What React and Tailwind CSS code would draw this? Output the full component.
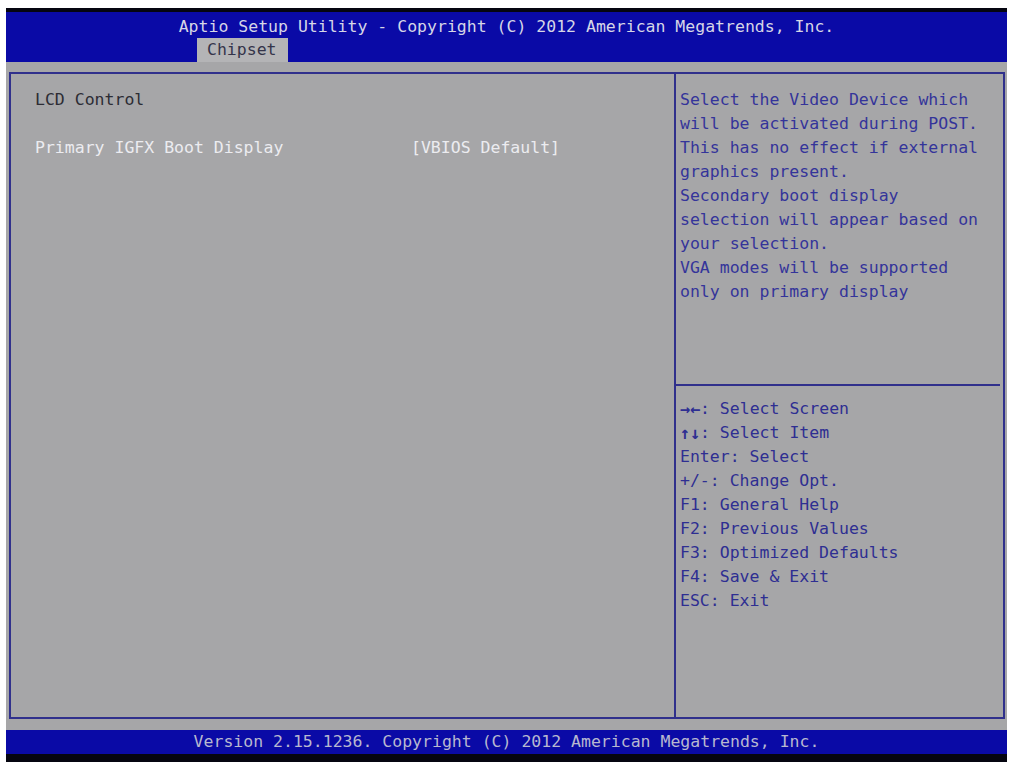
import React from "react";

const mono = { fontFamily: '"DejaVu Sans Mono", "Liberation Mono", monospace' };

function Arr({ children }) {
  return (
    <span className="inline-flex w-[20px] justify-center text-[17px] leading-none font-bold align-[-1px]">
      {children}
    </span>
  );
}

export default function App() {
  const help = [
    "Select the Video Device which",
    "will be activated during POST.",
    "This has no effect if external",
    "graphics present.",
    "Secondary boot display",
    "selection will appear based on",
    "your selection.",
    "VGA modes will be supported",
    "only on primary display",
  ];
  const keys = [
    [<Arr><span>→</span><span>←</span></Arr>, ": Select Screen"],
    [<Arr><span>↑</span><span>↓</span></Arr>, ": Select Item"],
    ["", "Enter: Select"],
    ["", "+/-: Change Opt."],
    ["", "F1: General Help"],
    ["", "F2: Previous Values"],
    ["", "F3: Optimized Defaults"],
    ["", "F4: Save & Exit"],
    ["", "ESC: Exit"],
  ];
  return (
    <div
      className="w-[1010px] h-[762px] bg-white pt-[8px] pl-[6px] pr-[3px] flex flex-col text-[16.5px]"
      style={mono}
    >
      <div className="h-[4px] bg-[#050510]" />
      <header className="h-[50px] bg-[#0a0aa6] flex flex-col pt-[4px]">
        <div className="h-[22px] leading-[22px] text-center text-[#d6d6e6] whitespace-pre">
          Aptio Setup Utility - Copyright (C) 2012 American Megatrends, Inc.
        </div>
        <div className="ml-[191px] w-[91px] h-[24px] leading-[24px] bg-[#b4b4b6] text-[#34344a] pl-[10px]">
          Chipset
        </div>
      </header>
      <div className="flex-1 bg-[#a6a6a8] pt-[10px] pl-[3px] pr-[2px] pb-[11px] flex">
        <div className="flex-1 flex border-2 border-[#30308c]">
          <div className="w-[663px] pt-[14px] pl-[24px] leading-[24px]">
            <div className="text-[#2c2c34]">LCD Control</div>
            <div className="h-[24px]" />
            <div className="flex text-[#ececf0] whitespace-pre">
              <span className="w-[376px]">Primary IGFX Boot Display</span>
              <span>[VBIOS Default]</span>
            </div>
          </div>
          <div className="flex-1 flex flex-col border-l-2 border-[#30308c]">
            <div className="h-[310px] pt-[14px] pl-[4px] leading-[24px] text-[#34349a]">
              {help.map((l, i) => (
                <div key={i} className="whitespace-pre">{l}</div>
              ))}
            </div>
            <div className="h-[2px] bg-[#30308c] mr-[3px]" />
            <div className="pt-[11px] pl-[4px] leading-[24px] text-[#2e2e92]">
              {keys.map((k, i) => (
                <div key={i} className="whitespace-pre h-[24px]">
                  {k[0]}
                  {k[1]}
                </div>
              ))}
            </div>
          </div>
        </div>
      </div>
      <footer className="h-[24px] leading-[24px] bg-[#0a0aa6] text-center text-[#b8b8d0] whitespace-pre">
        Version 2.15.1236. Copyright (C) 2012 American Megatrends, Inc.
      </footer>
      <div className="h-[8px] bg-[#050510]" />
    </div>
  );
}
